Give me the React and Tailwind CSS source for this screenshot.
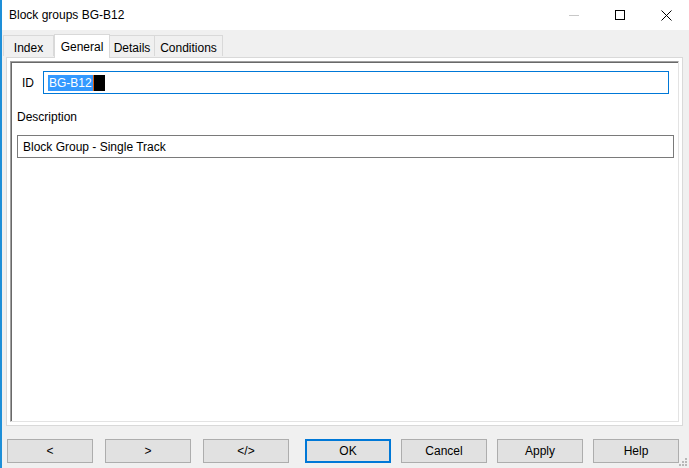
import React from "react";

const font = { fontFamily: '"Segoe UI", "Liberation Sans", Arial, sans-serif' };

function Btn({ children, primary, className = "" }) {
  return (
    <div
      className={
        "w-[86px] h-[24px] flex items-center justify-center bg-[#e1e1e1] text-[12px] text-black " +
        (primary ? "border-2 border-[#0078d7] " : "border border-[#adadad] ") +
        className
      }
    >
      {children}
    </div>
  );
}

export default function App() {
  return (
    <div
      className="w-[689px] h-[468px] bg-[#f0f0f0] border-l-2 border-[#1e8fd8] flex flex-col overflow-hidden relative"
      style={font}
    >
      {/* Title bar */}
      <div className="h-[30px] bg-white flex items-center shrink-0">
        <div className="pl-[7px] text-[12px] text-black flex-1">Block groups BG-B12</div>
        <div className="flex h-full">
          <div className="w-[46px] h-full flex items-center justify-center">
            <div className="w-[10px] h-px bg-[#c8c8c8]" />
          </div>
          <div className="w-[46px] h-full flex items-center justify-center">
            <div className="w-[10px] h-[10px] border border-black" />
          </div>
          <div className="w-[46px] h-full flex items-center justify-center">
            <svg width="11" height="11" viewBox="0 0 11 11">
              <path d="M0.5 0.5 L10.5 10.5 M10.5 0.5 L0.5 10.5" stroke="black" strokeWidth="1" fill="none" />
            </svg>
          </div>
        </div>
      </div>

      {/* Tabs */}
      <div className="h-[27px] flex items-end pl-px shrink-0 relative z-10">
        <div className="w-[51px] h-[21px] border border-b-0 border-[#d9d9d9] flex items-center justify-center pt-[3px] text-[12px] mb-px">
          Index
        </div>
        <div className="w-[56px] h-[24px] bg-white border border-b-0 border-[#d9d9d9] flex items-start justify-center pt-[3px] text-[12px] -mb-px">
          General
        </div>
        <div className="w-[45px] h-[21px] border border-b-0 border-l-0 border-[#d9d9d9] flex items-center justify-center pt-[3px] text-[12px] mb-px">
          Details
        </div>
        <div className="w-[68px] h-[21px] border border-b-0 border-l-0 border-[#d9d9d9] flex items-center justify-center pt-[3px] text-[12px] mb-px">
          Conditions
        </div>
      </div>

      {/* Tab page */}
      <div className="ml-[4px] w-[677px] h-[369px] bg-white border border-[#d9d9d9] p-[3px] shrink-0">
        <div className="w-full h-full border-t border-l border-[#a0a0a0] border-r border-b border-r-[#e3e3e3] border-b-[#e3e3e3]">
          <div className="w-full h-full border-t border-l border-[#696969] flex flex-col">
            <div className="flex items-center mt-[8px]">
              <div className="pl-[10px] w-[31px] text-[12px]">ID</div>
              <div className="w-[626px] h-[23px] border border-[#0078d7] flex items-center pl-[4px]">
                <span className="bg-[#3399ff] text-white text-[12px] leading-[16px] px-px">BG-B12</span>
                <span className="w-px h-[16px] bg-[#e06010]" />
                <span className="w-[11px] h-[16px] bg-black" />
              </div>
            </div>
            <div className="pl-[5px] mt-[15px] text-[12px] leading-[16px]">Description</div>
            <div className="ml-[5px] mt-[10px] w-[657px] h-[23px] border border-[#7a7a7a] flex items-center pl-[5px] text-[12px]">
              Block Group - Single Track
            </div>
          </div>
        </div>
      </div>

      {/* Buttons */}
      <div className="flex mt-[13px] ml-[5px]">
        <Btn>&lt;</Btn>
        <Btn className="ml-[12px]">&gt;</Btn>
        <Btn className="ml-[12px]">&lt;/&gt;</Btn>
        <Btn primary className="ml-[16px]">OK</Btn>
        <Btn className="ml-[10px]">Cancel</Btn>
        <Btn className="ml-[10px]">Apply</Btn>
        <Btn className="ml-[10px]">Help</Btn>
      </div>

      {/* Resize grip */}
      <svg className="absolute right-[1px] bottom-[1px]" width="9" height="9" viewBox="0 0 9 9">
        <rect x="6" y="0" width="2" height="2" fill="#b8b8b8" />
        <rect x="3" y="3" width="2" height="2" fill="#b8b8b8" />
        <rect x="6" y="3" width="2" height="2" fill="#b8b8b8" />
        <rect x="0" y="6" width="2" height="2" fill="#b8b8b8" />
        <rect x="3" y="6" width="2" height="2" fill="#b8b8b8" />
        <rect x="6" y="6" width="2" height="2" fill="#b8b8b8" />
      </svg>
    </div>
  );
}
